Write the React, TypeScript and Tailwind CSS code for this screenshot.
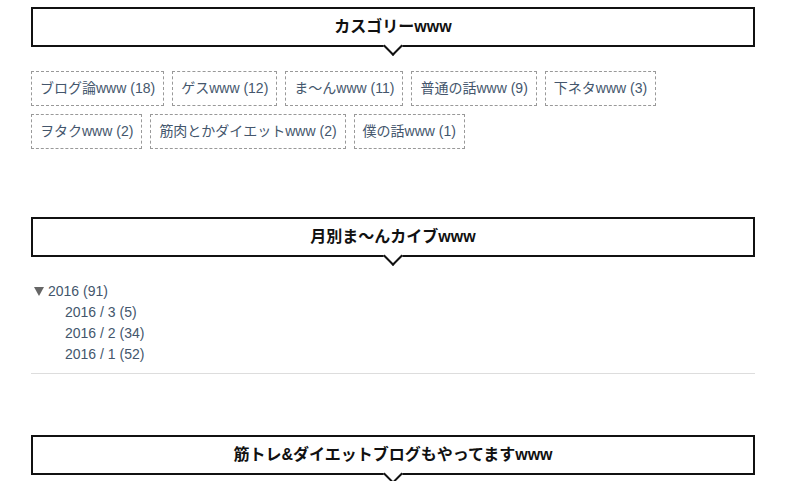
import type { ReactNode } from "react";

type Category = { name: string; count: number };

const categories: Category[] = [
  { name: "ブログ論www", count: 18 },
  { name: "ゲスwww", count: 12 },
  { name: "ま〜んwww", count: 11 },
  { name: "普通の話www", count: 9 },
  { name: "下ネタwww", count: 3 },
  { name: "ヲタクwww", count: 2 },
  { name: "筋肉とかダイエットwww", count: 2 },
  { name: "僕の話www", count: 1 },
];

const months = [
  { label: "2016 / 3", count: 5 },
  { label: "2016 / 2", count: 34 },
  { label: "2016 / 1", count: 52 },
];

function WidgetTitle({ children }: { children: ReactNode }) {
  return (
    <div className="relative h-[40px] border-2 border-[#111] bg-white flex items-center justify-center">
      <h3 className="text-[16px] font-bold text-[#111] leading-none">{children}</h3>
      {/* speech-bubble notch */}
      <span className="absolute left-1/2 -bottom-[8px] -ml-[7px] w-[14px] h-[14px] rotate-45 bg-white border-r-2 border-b-2 border-[#111]" />
    </div>
  );
}

export default function App() {
  return (
    <div
      className="w-[796px] h-[481px] overflow-hidden bg-white pl-[31px] pt-[7px]"
      style={{ fontFamily: '"Liberation Sans", Arial, "Noto Sans CJK JP", sans-serif' }}
    >
      <div className="w-[724px]">
        <section>
          <WidgetTitle>カスゴリーwww</WidgetTitle>
          <ul className="mt-[24px] flex flex-wrap gap-[8px]">
            {categories.map((c) => (
              <li key={c.name}>
                <a className="h-[35px] px-[8px] flex items-center border border-dashed border-[#999] text-[14px] text-[#44566c] whitespace-nowrap">
                  {c.name} ({c.count})
                </a>
              </li>
            ))}
          </ul>
        </section>

        <section className="mt-[68px]">
          <WidgetTitle>月別ま〜んカイブwww</WidgetTitle>
          <div className="mt-[24px] pb-[8px] border-b border-[#ddd] text-[14px] leading-[21px] text-[#44566c]">
            <div className="flex items-center">
              {/* open-year marker */}
              <svg width="10" height="9" viewBox="0 0 10 9" className="ml-[3px] mr-[4px]">
                <path d="M0 0H10L5 9Z" fill="#666" />
              </svg>
              <span>2016 (91)</span>
            </div>
            <ul className="pl-[34px]">
              {months.map((m) => (
                <li key={m.label}>
                  {m.label} ({m.count})
                </li>
              ))}
            </ul>
          </div>
        </section>

        <section className="mt-[61px]">
          <WidgetTitle>筋トレ&amp;ダイエットブログもやってますwww</WidgetTitle>
        </section>
      </div>
    </div>
  );
}
